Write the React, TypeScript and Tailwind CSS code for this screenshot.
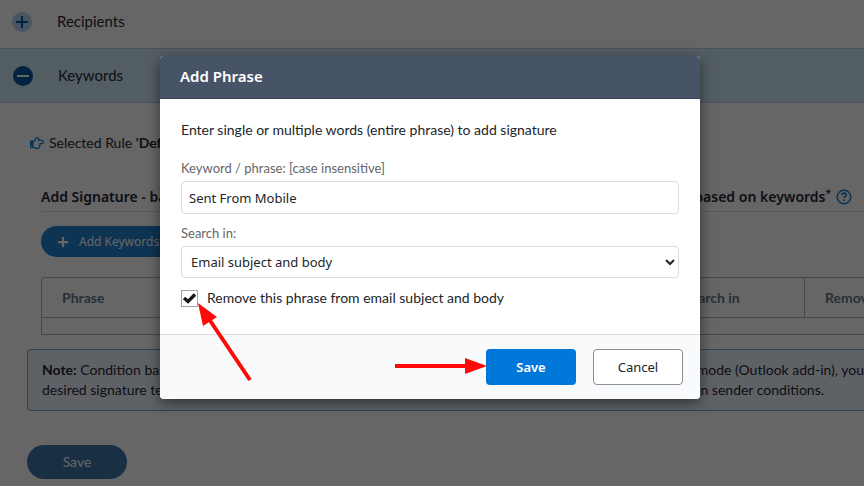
import { FaPlus, FaRegHandPointRight } from "react-icons/fa";

type Column = { label: string; width: string };

const columns: Column[] = [
  { label: "Phrase", width: "w-auto" },
  { label: "Search in", width: "w-[142px]" },
  { label: "Remove", width: "w-[59px]" },
];

function HelpIcon() {
  return (
    <svg viewBox="0 0 16 16" className="size-4" fill="none" stroke="#1a7fcf" strokeWidth="1.5">
      <circle cx="8" cy="8" r="6.8" />
      <path d="M5.9 6.3c0-1.4 1-2.1 2.2-2.1 1.2 0 2.1.8 2.1 1.8 0 1.5-2.1 1.6-2.1 3.1" strokeWidth="1.7" />
      <path d="M8.1 10.5v1.6" strokeWidth="1.8" />
    </svg>
  );
}

function RuleEditor() {
  return (
    <main className="text-[#26263a]">
      <button type="button" className="flex h-12 w-full items-center gap-[25px] pb-[5px] pl-3 text-left text-[15px]">
        <svg viewBox="0 0 20 20" className="size-5">
          <circle cx="10" cy="10" r="10" fill="#b5d8f7" />
          <path d="M10 4v12M4 10h12" stroke="#06559e" strokeWidth="2" />
        </svg>
        Recipients
      </button>
      <button
        type="button"
        className="flex h-[55px] w-full items-center gap-[25px] border-y border-[#b9cdda] bg-[#d0ebf8] pl-[13px] text-left text-[15px]"
      >
        <svg viewBox="0 0 20 20" className="size-5">
          <circle cx="10" cy="10" r="10" fill="#06559e" />
          <path d="M4 10h12" stroke="#fff" strokeWidth="2" />
        </svg>
        Keywords
      </button>

      <p className="mt-[30px] flex items-center gap-[5px] pl-[30px] text-sm leading-5">
        <FaRegHandPointRight className="size-[14px] text-[#1a7fcf]" />
        <span>
          Selected Rule <b>'Default'</b>
        </span>
      </p>

      <section className="pl-[41px]">
        <h2 className="mt-[29px] flex h-[30px] items-center justify-between border-b border-[#e0e0e0] pr-3 font-['Noto_Sans',sans-serif] text-sm font-semibold">
          <span>Add Signature - based</span>
          <span className="flex items-center gap-[5px]">
            <span>
              based on keywords<sup className="text-[10px]">*</sup>
            </span>
            <HelpIcon />
          </span>
        </h2>
        <button
          type="button"
          className="mt-[14px] flex h-[31px] items-center gap-[10px] rounded-full bg-[#2382cf] px-4 font-['Noto_Sans',sans-serif] text-xs text-white"
        >
          <FaPlus className="size-3" />
          Add Keywords
        </button>
        <table className="mt-5 w-full table-fixed border-separate border-spacing-0 rounded-tl border-y border-l border-[#a9b4c0] text-left">
          <thead>
            <tr>
              {columns.map((c, i) => (
                <th
                  key={c.label}
                  className={`${c.width} h-10 border-b border-[#a9b4c0] pl-5 text-sm font-bold text-[#66788c] ${
                    i < columns.length - 1 ? "border-r" : ""
                  }`}
                >
                  {c.label}
                </th>
              ))}
            </tr>
          </thead>
          <tbody>
            <tr>
              <td colSpan={3} className="h-4" />
            </tr>
          </tbody>
        </table>
      </section>

      <div className="mt-[14px] ml-[27px] rounded-l border-y border-l border-[#7fa6cf] bg-[#eef4fb] py-[10px] pl-[14px] text-sm leading-5">
        <p className="flex justify-between whitespace-nowrap">
          <span>
            <b>Note:</b> Condition based
          </span>
          <span>mode (Outlook add-in), you</span>
        </p>
        <p className="flex justify-between pr-10 whitespace-nowrap">
          <span>desired signature template</span>
          <span>on sender conditions.</span>
        </p>
      </div>

      <button
        type="button"
        className="mt-[34px] ml-[27px] h-[34px] w-[100px] rounded-full bg-[#3d76ab] text-sm text-white"
      >
        Save
      </button>
    </main>
  );
}

// callout arrows, drawn in the dialog's own coordinates
function Arrows() {
  return (
    <svg viewBox="0 0 540 343" className="pointer-events-none absolute top-0 left-0 w-full" fill="#fe0a0a">
      <path d="M38 247l19 14-14 9z" />
      <path d="M49 263l41 61" stroke="#fe0a0a" strokeWidth="4" />
      <path d="M305 302v16l22-8z" />
      <path d="M235 310h71" stroke="#fe0a0a" strokeWidth="4" />
    </svg>
  );
}

function AddPhraseDialog() {
  return (
    <div
      role="dialog"
      aria-labelledby="dialog-title"
      className="relative w-full max-w-[540px] self-start rounded bg-white text-sm text-[#212529] shadow-[0_4px_14px_rgba(0,0,0,0.5)]"
    >
      <h1
        id="dialog-title"
        className="flex h-[43px] items-center rounded-t border-b border-[#36435a] bg-[#475467] px-5 font-['Noto_Sans',sans-serif] text-[15px] font-semibold text-white"
      >
        Add Phrase
      </h1>
      <form className="px-[21px] pt-[21px] pb-[26px]">
        <p className="leading-5">Enter single or multiple words (entire phrase) to add signature</p>
        <label htmlFor="phrase" className="mt-[18px] block text-[13px] leading-5 text-[#666]">
          Keyword / phrase: [case insensitive]
        </label>
        <input
          id="phrase"
          type="text"
          defaultValue="Sent From Mobile"
          className="mt-[3px] block h-[33px] w-full rounded border border-[#dadcdf] px-[7px] font-['Noto_Sans',sans-serif] text-[13px]"
        />
        <label htmlFor="search-in" className="mt-[9px] block text-[13px] leading-5 text-[#666]">
          Search in:
        </label>
        <select
          id="search-in"
          className="mt-[3px] block h-8 w-full rounded border border-[#dadcdf] bg-white px-[5px] font-['Noto_Sans',sans-serif] text-[13px]"
        >
          <option>Email subject and body</option>
          <option>Email subject</option>
          <option>Email body</option>
        </select>
        <div className="mt-[10px] flex items-center gap-[9px]">
          <span className="relative flex size-[17px]">
            <input
              id="remove-phrase"
              type="checkbox"
              defaultChecked
              className="peer size-[17px] appearance-none border border-[#93a5b8]"
            />
            <svg
              viewBox="0 0 17 17"
              className="pointer-events-none absolute inset-0 hidden peer-checked:block"
              fill="none"
              stroke="#16161d"
              strokeWidth="3.4"
            >
              <path d="M3 8l4 3.5 7-7" />
            </svg>
          </span>
          <label htmlFor="remove-phrase" className="leading-5">
            Remove this phrase from email subject and body
          </label>
        </div>
      </form>
      <footer className="flex h-[65px] items-center justify-end gap-[17px] rounded-b border-t border-[#dadde0] bg-[#f9fafc] px-[17px] font-['Noto_Sans',sans-serif] text-[13px]">
        <button type="button" className="h-9 w-[90px] rounded bg-[#0078d9] font-semibold text-white">
          Save
        </button>
        <button type="button" className="h-9 w-[90px] rounded border border-[#8b8e93] bg-white">
          Cancel
        </button>
      </footer>
      <Arrows />
    </div>
  );
}

export default function App() {
  return (
    <div className="relative min-h-screen overflow-hidden bg-white font-[Lato,sans-serif]">
      <RuleEditor />
      <div className="absolute inset-0 flex justify-center bg-black/60 pt-14 pr-1">
        <AddPhraseDialog />
      </div>
    </div>
  );
}
